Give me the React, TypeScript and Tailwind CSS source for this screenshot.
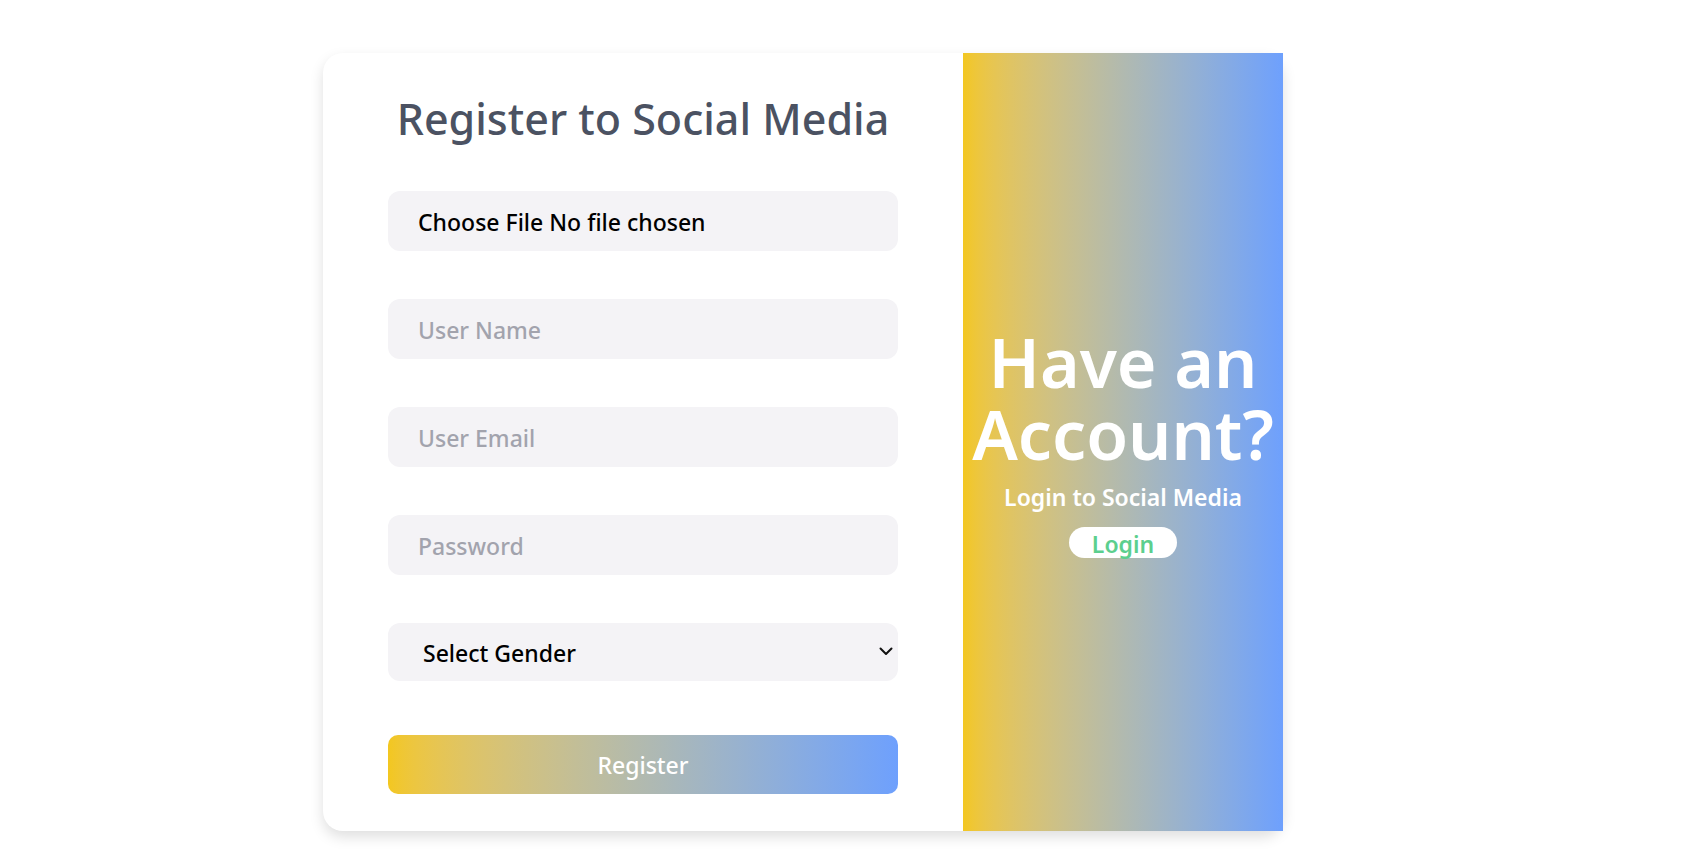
import React from "react";

export default function App() {
  return (
    <div
      className="min-h-screen w-full bg-white"
      style={{ fontFamily: '"Noto Sans", "Open Sans", sans-serif' }}
    >
      <div className="pt-[53px] pl-[323px]">
        <div className="flex h-[778px] w-[960px] rounded-[20px] bg-white shadow-[0_6px_14px_rgba(0,0,0,0.13)]">
          {/* Left: form */}
          <div className="flex w-[640px] flex-col items-center pt-[40px]">
            <h1 className="text-[43px] font-medium leading-[1.2] text-[#4b5262]">
              Register to Social Media
            </h1>
            <form
              className="mt-[46px] flex w-[510px] flex-col"
              onSubmit={(e) => e.preventDefault()}
            >
              <div className="flex h-[60px] items-center rounded-xl bg-[#f4f3f6] px-[30px] pt-[3px] text-[23px] font-medium text-black">
                <span>Choose File</span>
                <span className="ml-[6px]">No file chosen</span>
              </div>
              <input
                type="text"
                placeholder="User Name"
                className="mt-[48px] h-[60px] rounded-xl bg-[#f4f3f6] px-[30px] pt-[3px] text-[23px] font-medium text-black outline-none placeholder:text-[#a2a3ad]"
              />
              <input
                type="email"
                placeholder="User Email"
                className="mt-[48px] h-[60px] rounded-xl bg-[#f4f3f6] px-[30px] pt-[3px] text-[23px] font-medium text-black outline-none placeholder:text-[#a2a3ad]"
              />
              <input
                type="password"
                placeholder="Password"
                className="mt-[48px] h-[60px] rounded-xl bg-[#f4f3f6] px-[30px] pt-[3px] text-[23px] font-medium text-black outline-none placeholder:text-[#a2a3ad]"
              />
              <div className="relative mt-[48px]">
                <select
                  defaultValue=""
                  className="h-[58px] w-full appearance-none rounded-xl bg-[#f4f3f6] pl-[35px] pr-[40px] pt-[3px] text-[23px] font-medium text-black outline-none"
                >
                  <option value="">Select Gender</option>
                  <option value="male">Male</option>
                  <option value="female">Female</option>
                </select>
                <svg
                  className="pointer-events-none absolute right-[5px] top-[23px]"
                  width="14"
                  height="10"
                  viewBox="0 0 14 10"
                  fill="none"
                >
                  <path
                    d="M1.5 2.5 L7 8 L12.5 2.5"
                    stroke="#111"
                    strokeWidth="2"
                    strokeLinecap="round"
                    strokeLinejoin="round"
                  />
                </svg>
              </div>
              <button
                type="submit"
                className="mt-[54px] h-[59px] rounded-[10px] bg-gradient-to-r from-[#f3c71f] to-[#6ea0fd] pt-[2px] text-[23px] font-medium text-white"
              >
                Register
              </button>
            </form>
          </div>

          {/* Right: gradient panel */}
          <div className="flex w-[320px] flex-col items-center justify-center bg-gradient-to-r from-[#f3c71f] to-[#6ea0fd] text-center text-white">
            <h2 className="text-[68px] font-semibold leading-[72px]">
              Have an Account?
            </h2>
            <p className="mt-[12px] text-[23px] font-semibold leading-[30px]">
              Login to Social Media
            </p>
            <button
              type="button"
              className="mt-[15px] h-[31px] w-[108px] rounded-full bg-white text-[23px] font-semibold leading-[31px] text-[#5ccf8e]"
            >
              <span className="relative top-[2px]">Login</span>
            </button>
          </div>
        </div>
      </div>
    </div>
  );
}
